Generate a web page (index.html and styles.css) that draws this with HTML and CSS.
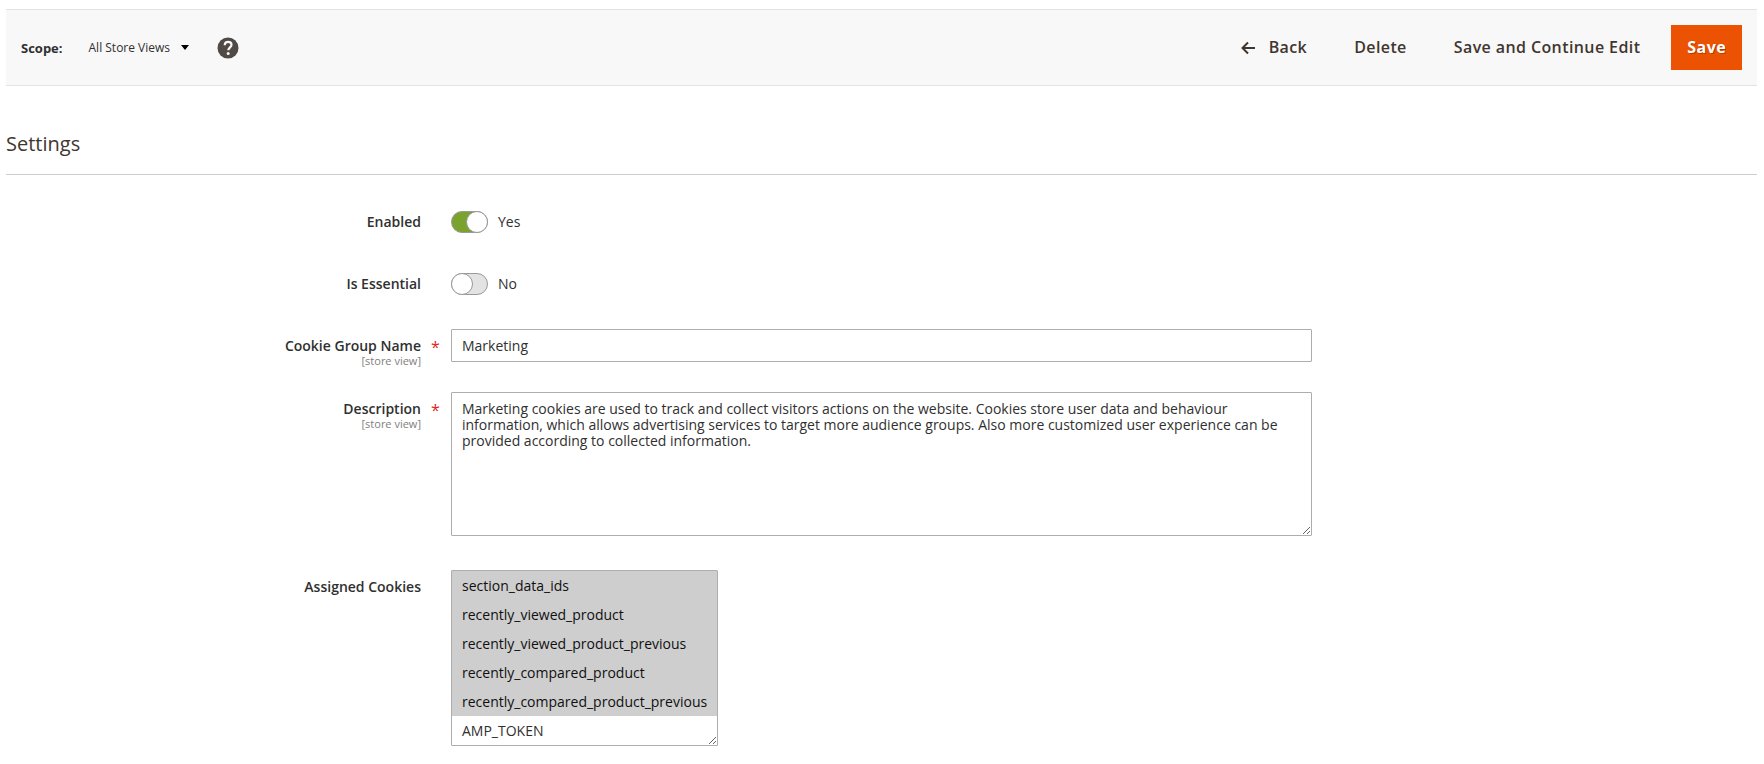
FILE: index.html
```
<!DOCTYPE html>
<html lang="en">
<head>
<meta charset="utf-8">
<title>Cookie Group</title>
<link rel="stylesheet" href="styles.css">
</head>
<body>
<form class="page">
  <header class="toolbar">
    <div class="scope">
      <span class="scope-label">Scope:</span>
      <button type="button" class="scope-switch">All Store Views
        <svg class="caret" viewBox="0 0 8 5" aria-hidden="true"><path d="M0 0h8L4 5z"/></svg>
      </button>
      <button type="button" class="help" aria-label="Help">
        <svg viewBox="0 0 22 22" aria-hidden="true">
          <circle cx="11" cy="11" r="10.5" fill="#514943"/>
          <path d="M7.7 8.2C7.8 6 9.2 4.8 11.1 4.8c2 0 3.4 1.2 3.4 3 0 2.4-3.2 2.7-3.2 5.5" fill="none" stroke="#f8f8f8" stroke-width="2.2"/>
          <circle cx="11.2" cy="16.4" r="1.5" fill="#f8f8f8"/>
        </svg>
      </button>
    </div>
    <div class="actions">
      <button type="button" class="action">
        <svg class="arrow" viewBox="0 0 14 14" aria-hidden="true"><path d="M14 7H1.5M7 1.5L1.5 7L7 12.5" fill="none" stroke="#41362f" stroke-width="2"/></svg>
        Back</button>
      <button type="button" class="action">Delete</button>
      <button type="button" class="action">Save and Continue Edit</button>
      <button type="submit" class="action primary">Save</button>
    </div>
  </header>
  <main>
    <h1 class="section-title">Settings</h1>
    <div class="fields">
      <div class="field">
        <label class="label" for="enabled">Enabled</label>
        <div class="control toggle-row">
          <input type="checkbox" role="switch" class="toggle" id="enabled" checked>
          <label for="enabled">Yes</label>
        </div>
      </div>
      <div class="field">
        <label class="label" for="essential">Is Essential</label>
        <div class="control toggle-row">
          <input type="checkbox" role="switch" class="toggle" id="essential">
          <label for="essential">No</label>
        </div>
      </div>
      <div class="field">
        <label class="label" for="name">Cookie Group Name<small>[store view]</small></label>
        <span class="required">*</span>
        <input class="control text" id="name" type="text" value="Marketing">
      </div>
      <div class="field">
        <label class="label" for="description">Description<small>[store view]</small></label>
        <span class="required">*</span>
        <textarea class="control text area" id="description" rows="8">Marketing cookies are used to track and collect visitors actions on the website. Cookies store user data and behaviour information, which allows advertising services to target more audience groups. Also more customized user experience can be provided according to collected information.</textarea>
      </div>
      <div class="field list-field">
        <label class="label" for="cookies">Assigned Cookies</label>
        <select class="control list" id="cookies" multiple size="6">
          <option selected>section_data_ids</option>
          <option selected>recently_viewed_product</option>
          <option selected>recently_viewed_product_previous</option>
          <option selected>recently_compared_product</option>
          <option selected>recently_compared_product_previous</option>
          <option>AMP_TOKEN</option>
        </select>
      </div>
    </div>
  </main>
</form>
</body>
</html>
```
FILE: styles.css
```
*, *::before {
  box-sizing: border-box;
}

body {
  margin: 0;
  background: #fff;
  color: #303030;
  font: 14px/16px "Open Sans", "Noto Sans", sans-serif;
}

button, input, textarea, select {
  margin: 0;
  color: inherit;
  font: inherit;
}

button {
  border: 0;
  padding: 0;
  background: none;
  cursor: pointer;
}

.page {
  padding: 9px 7px 18px 6px;
}

.toolbar {
  display: flex;
  align-items: center;
  justify-content: space-between;
  padding: 15px;
  border-top: 1px solid #e3e3e3;
  border-bottom: 1px solid #e3e3e3;
  background: #f8f8f8;
}

.scope {
  display: flex;
  align-items: center;
  font-size: 12px;
}

.scope-label {
  font-size: 13px;
  font-weight: 700;
}

.scope-switch {
  display: flex;
  align-items: center;
  gap: 11px;
  margin: 0 28px 0 26px;
}

.caret {
  width: 8px;
  height: 5px;
  fill: #000;
}

.help svg {
  display: block;
  width: 22px;
  height: 22px;
}

.actions {
  display: flex;
  align-items: center;
  gap: 15px;
}

.action {
  display: flex;
  align-items: center;
  gap: 14px;
  padding: 11px 16px;
  color: #41362f;
  font-size: 16px;
  font-weight: 600;
  line-height: 23px;
  letter-spacing: 0.025em;
}

.arrow {
  width: 14px;
  height: 14px;
}

.primary {
  background: #eb5202;
  color: #fff;
  font-weight: 700;
  text-shadow: 1px 1px 0 rgba(0, 0, 0, 0.25);
}

.section-title {
  margin: 42px 0 0;
  padding: 3px 0 17px;
  border-bottom: 1px solid #ccc;
  color: #41362f;
  font-size: 20px;
  font-weight: 400;
  line-height: 26px;
}

.fields {
  display: grid;
  gap: 29px;
  padding-top: 30px;
}

.field {
  display: grid;
  grid-template-columns: 23.7% 30px 49.2%;
  align-items: start;
}

.label {
  grid-column: 1;
  margin-bottom: -5px;
  padding-top: 9px;
  font-weight: 600;
  text-align: right;
}

.label small {
  display: block;
  color: #808080;
  font-size: 11px;
  font-weight: 400;
  line-height: 14px;
}

.required {
  grid-column: 2;
  padding: 10px 0 0 10px;
  color: #e22626;
  font-size: 16px;
}

.control {
  grid-column: 3;
}

.toggle-row {
  display: flex;
  align-items: center;
  gap: 10px;
  height: 33px;
}

.toggle {
  display: flex;
  width: 37px;
  height: 22px;
  border: 1px solid #999;
  border-radius: 11px;
  background: #e3e3e3;
  appearance: none;
}

.toggle::before {
  width: 22px;
  height: 22px;
  margin: -1px;
  border: 1px solid #999;
  border-radius: 50%;
  background: #fff;
  content: "";
}

.toggle:checked {
  justify-content: flex-end;
  background: #79a22e;
}

.text {
  width: 100%;
  height: 33px;
  padding: 8px 10px;
  border: 1px solid #adadad;
  border-radius: 1px;
  background: #fff;
  line-height: 16px;
}

.area {
  display: block;
  height: 144px;
  resize: both;
}

.list-field {
  margin-top: 5px;
}

.list {
  justify-self: start;
  padding: 0;
  overflow: auto;
  border: 1px solid #adadad;
  border-radius: 1px;
  resize: both;
}

.list option {
  min-height: 29px;
  padding: 5px 10px;
  line-height: 19px;
}

.list option:checked {
  background: #cecece linear-gradient(#cecece, #cecece);
}
```
